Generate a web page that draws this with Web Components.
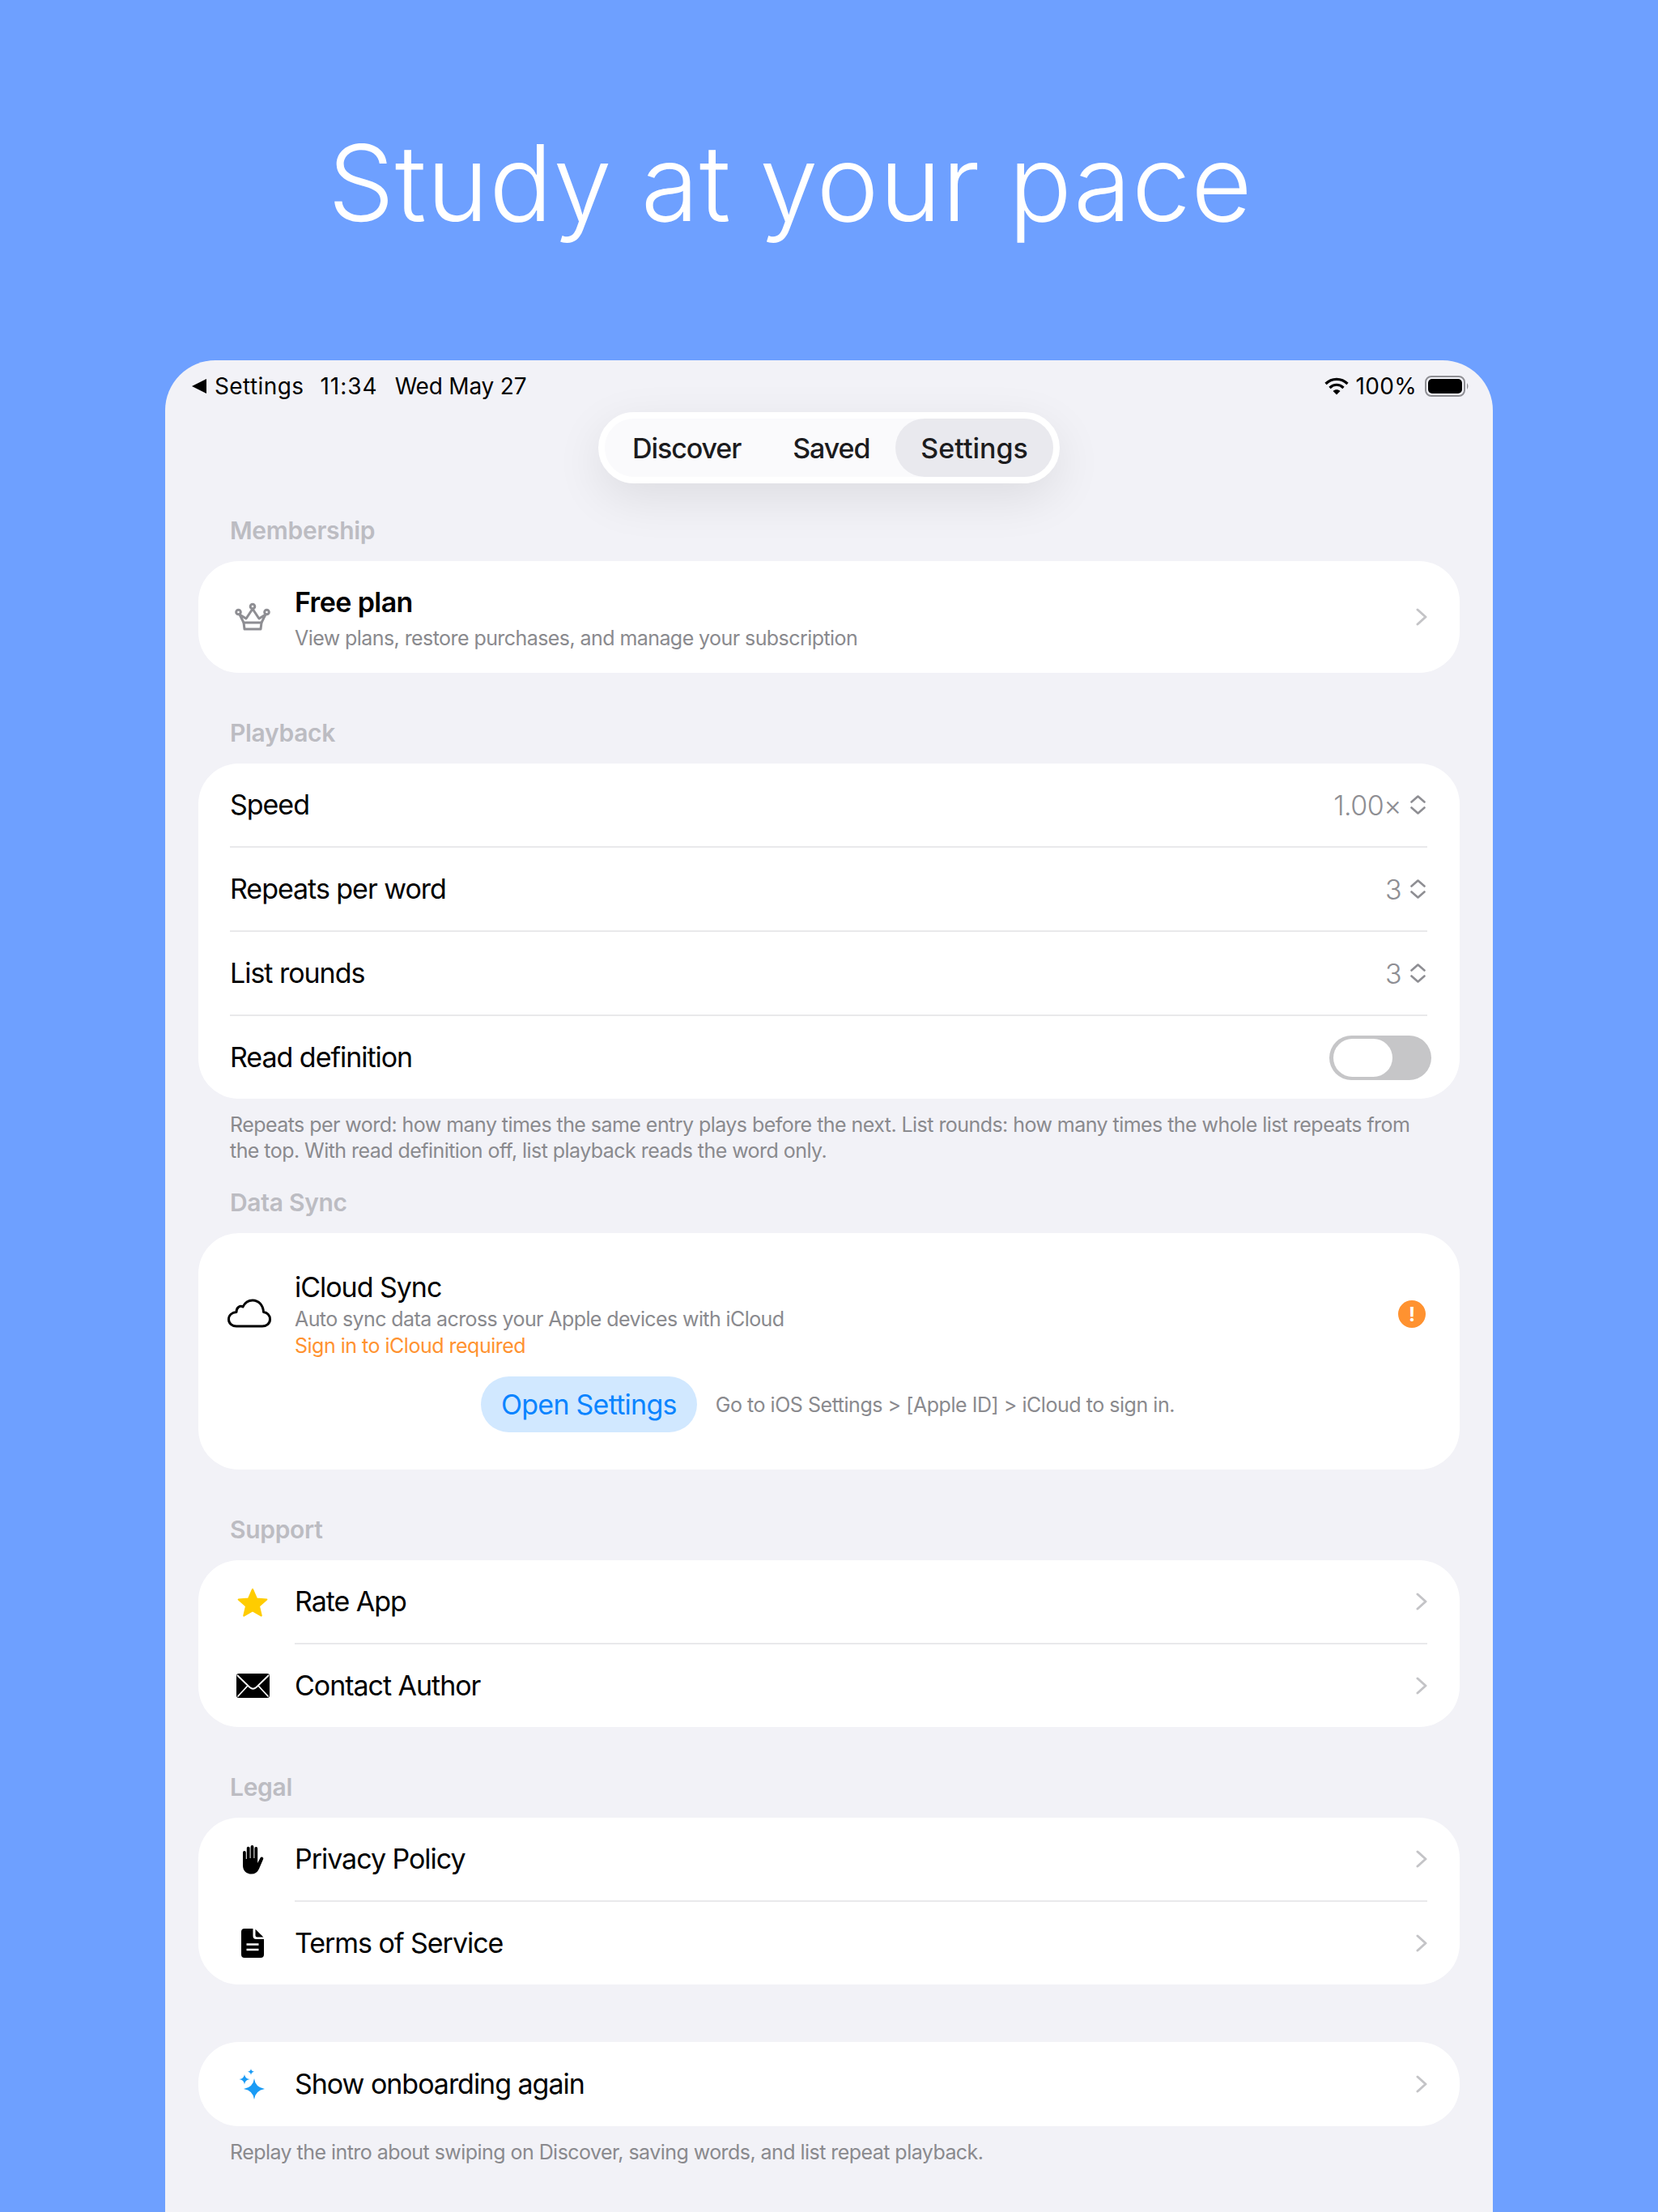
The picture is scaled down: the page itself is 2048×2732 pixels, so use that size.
<!DOCTYPE html>
<html lang="en">
<head>
<meta charset="utf-8">
<title>Study at your pace</title>
<style>
    html, body { margin: 0; padding: 0; }
    body {
        width: 2048px;
        height: 2732px;
        overflow: hidden;
        background: #6EA0FF;
        font-family: Inter, "Liberation Sans", sans-serif;
    }
</style>
</head>
<body>
<app-screen>
    <promo-title slot="title">Study at your pace</promo-title>

    <status-bar></status-bar>
    <tab-bar></tab-bar>

    <settings-section label="Membership">
        <settings-card>
            <settings-row tall strong label="Free plan" sub="View plans, restore purchases, and manage your subscription">
                <app-icon slot="icon" name="crown"></app-icon>
                <row-chevron slot="trailing"></row-chevron>
            </settings-row>
        </settings-card>
    </settings-section>

    <settings-section label="Playback" note="Repeats per word: how many times the same entry plays before the next. List rounds: how many times the whole list repeats from the top. With read definition off, list playback reads the word only.">
        <settings-card>
            <settings-row divider label="Speed"><value-stepper slot="trailing">1.00×</value-stepper></settings-row>
            <settings-row divider label="Repeats per word"><value-stepper slot="trailing">3</value-stepper></settings-row>
            <settings-row divider label="List rounds"><value-stepper slot="trailing">3</value-stepper></settings-row>
            <settings-row label="Read definition"><toggle-switch slot="trailing"></toggle-switch></settings-row>
        </settings-card>
    </settings-section>

    <settings-section close label="Data Sync">
        <settings-card>
            <sync-panel></sync-panel>
        </settings-card>
    </settings-section>

    <settings-section label="Support">
        <settings-card>
            <settings-row divider label="Rate App">
                <app-icon slot="icon" name="star"></app-icon>
                <row-chevron slot="trailing"></row-chevron>
            </settings-row>
            <settings-row label="Contact Author">
                <app-icon slot="icon" name="mail"></app-icon>
                <row-chevron slot="trailing"></row-chevron>
            </settings-row>
        </settings-card>
    </settings-section>

    <settings-section label="Legal">
        <settings-card>
            <settings-row divider label="Privacy Policy">
                <app-icon slot="icon" name="hand"></app-icon>
                <row-chevron slot="trailing"></row-chevron>
            </settings-row>
            <settings-row label="Terms of Service">
                <app-icon slot="icon" name="doc"></app-icon>
                <row-chevron slot="trailing"></row-chevron>
            </settings-row>
        </settings-card>
    </settings-section>

    <settings-section wide note="Replay the intro about swiping on Discover, saving words, and list repeat playback.">
        <settings-card>
            <settings-row roomy label="Show onboarding again">
                <app-icon slot="icon" name="sparkles"></app-icon>
                <row-chevron slot="trailing"></row-chevron>
            </settings-row>
        </settings-card>
    </settings-section>
</app-screen>

<script>
const ICONS = {
    crown: `<svg width="44" height="34" viewBox="0 0 44 34" fill="none" stroke="#8E8E93" stroke-width="3" stroke-linejoin="round">
        <circle cx="4.5" cy="11" r="2.8"/><circle cx="22" cy="4" r="2.8"/><circle cx="39.5" cy="11" r="2.8"/>
        <path d="M6 14 L11 24 H33 L38 14 L30 19 L22 7 L14 19 Z"/>
        <path d="M11 24 L12 32 H32 L33 24"/></svg>`,
    star: `<svg width="38" height="36" viewBox="0 0 38 36"><path fill="#FFCC00" stroke="#FFCC00" stroke-width="2" stroke-linejoin="round" d="M19 2 L24 13.4 L36.4 14.6 L27 22.8 L29.8 34.6 L19 28.3 L8.2 34.6 L11 22.8 L1.6 14.6 L14 13.4 Z"/></svg>`,
    mail: `<svg width="41" height="30" viewBox="0 0 41 30"><rect width="41" height="30" rx="3" fill="#000"/>
        <path d="M1 2 L16.5 17 Q20.5 20.5 24.5 17 L40 2 M1.5 28.5 L13.5 15.5 M39.5 28.5 L27.5 15.5" fill="none" stroke="#fff" stroke-width="1.8"/></svg>`,
    hand: `<svg width="27" height="36" viewBox="0 0 27 36" fill="#000">
        <path d="M1 9 a1.9 1.9 0 0 1 3.8 0 V17 H5.8 V3.6 a1.9 1.9 0 0 1 3.8 0 V16 H10.6 V2 a1.9 1.9 0 0 1 3.8 0 V16 H15.4 V4 a1.9 1.9 0 0 1 3.8 0 V22 L22.6 15.6 a1.9 1.9 0 0 1 3.4 1.8 L20.8 29.5 C18.8 33.6 15.8 35.6 11.8 35.6 C5.4 35.6 1 31.6 1 25 Z"/></svg>`,
    doc: `<svg width="28" height="36" viewBox="0 0 28 36"><path fill="#000" d="M4 0 H14.5 V9 Q14.5 13 18.5 13 H28 V32 Q28 36 24 36 H4 Q0 36 0 32 V4 Q0 0 4 0 Z"/>
        <path fill="#000" d="M17.5 0.8 L27.4 10.5 H19.5 Q17.5 10.5 17.5 8.5 Z"/>
        <path d="M6.5 19.5 H21.5 M6.5 26 H21.5" stroke="#fff" stroke-width="2.4"/></svg>`,
    sparkles: `<svg width="32" height="38" viewBox="0 0 32 38" fill="#1A9BF5">
        <path d="M18 12 Q19.2 23 31 25 Q19.2 27 18 38 Q16.8 27 5 25 Q16.8 23 18 12 Z"/>
        <path d="M6 7 Q6.6 12.4 12.6 13 Q6.6 13.6 6 19.6 Q5.4 13.6 -0.6 13 Q5.4 12.4 6 7 Z"/>
        <path d="M14 0 Q14.4 3.2 18 3.8 Q14.4 4.4 14 8 Q13.6 4.4 10 3.8 Q13.6 3.2 14 0 Z"/></svg>`,
    cloud: `<svg width="54" height="36" viewBox="0 0 54 36" fill="none" stroke="#000" stroke-width="3" stroke-linejoin="round">
        <path d="M11 34 H43 C48.500 34 52.500 30.500 52.500 25.500 C52.500 20.500 49 17 44.500 16.500 C44 8 38.500 2 31 2 C25.500 2 21.500 5 19 10 C17.500 9 15 9 13.500 10.500 C11.500 12 11 14 11 16.500 C5.500 17 1.500 20.500 1.500 25.500 C1.500 30.500 5.500 34 11 34 Z"/></svg>`
};

class AppScreen extends HTMLElement {
    constructor() {
        super();
        this.attachShadow({ mode: "open" });
        this.shadowRoot.innerHTML = `
            <style>
                :host { display: block; }
                .frame {
                    margin: 0 204px;
                    height: 2287px;
                    box-sizing: border-box;
                    padding: 0 41px;
                    background: #F2F2F7;
                    border-radius: 62px 62px 0 0;
                    overflow: hidden;
                }
            </style>
            <slot name="title"></slot>
            <div class="frame"><slot></slot></div>
        `;
    }
}

class PromoTitle extends HTMLElement {
    constructor() {
        super();
        this.attachShadow({ mode: "open" });
        this.shadowRoot.innerHTML = `
            <style>
                :host {
                    display: flex;
                    align-items: center;
                    height: 445px;
                    box-sizing: border-box;
                    padding: 0 0 0 405px;
                    color: #fff;
                    font-size: 130px;
                    font-weight: 300;
                    letter-spacing: .6px;
                    word-spacing: -2px;
                    white-space: nowrap;
                }
                div { margin-top: 6px; }
            </style>
            <div><slot></slot></div>
        `;
    }
}

class StatusBar extends HTMLElement {
    constructor() {
        super();
        this.attachShadow({ mode: "open" });
        this.shadowRoot.innerHTML = `
            <style>
                :host {
                    display: flex;
                    align-items: center;
                    height: 64px;
                    margin: 0 -13px 0 -8px;
                    color: #000;
                    font-size: 28px;
                    line-height: 34px;
                    white-space: nowrap;
                }
                .back { width: 0; height: 0; border: 9px solid transparent; border-left: 0; border-right: 18px solid #000; margin-right: 10px; }
                .app { letter-spacing: .4px; }
                .time { margin-left: 20px; letter-spacing: 1px; }
                .date { margin-left: 21px; letter-spacing: -.2px; }
                .right { margin-left: auto; display: flex; align-items: center; }
                .pct { margin-left: 9px; margin-right: 10px; letter-spacing: .3px; }
                .battery { display: block; }
            </style>
            <span class="back"></span><span class="app">Settings</span><span class="time">11:34</span><span class="date">Wed May 27</span>
            <span class="right">
                <svg width="30" height="22" viewBox="0 0 30 22" fill="none" stroke="#000" stroke-width="3.200">
                    <path d="M1.500 8 C9 0.500 21 0.500 28.500 8"/>
                    <path d="M6.500 13 C11.500 8 18.500 8 23.500 13"/>
                    <path d="M15 21.500 L10.500 17 C13 14.800 17 14.800 19.500 17 Z" fill="#000" stroke="none"/>
                </svg>
                <span class="pct">100%</span>
                <svg class="battery" width="56" height="26" viewBox="0 0 56 26">
                    <rect x="1" y="1" width="48" height="24" rx="7" fill="none" stroke="#8E8E93" stroke-width="2"/>
                    <rect x="4" y="4" width="42" height="18" rx="5" fill="#000"/>
                    <path d="M52 9 Q55 13 52 17 Z" fill="#8E8E93"/>
                </svg>
            </span>
        `;
    }
}

class TabBar extends HTMLElement {
    constructor() {
        super();
        this.attachShadow({ mode: "open" });
        this.shadowRoot.innerHTML = `
            <style>
                :host { display: flex; justify-content: center; }
                .pill {
                    display: flex;
                    align-items: stretch;
                    height: 72px;
                    padding: 0;
                    border: 8px solid #fff;
                    border-radius: 44px;
                    background: #FAFAFC;
                    box-shadow: 0 18px 60px rgba(0, 0, 0, .09);
                    font-size: 34px;
                    font-weight: 500;
                    letter-spacing: -1.1px;
                    color: #1C1C1E;
                }
                .tab { display: flex; align-items: center; padding: 0 32px; border-radius: 36px; }
                .tab:first-child { padding-left: 34px; }
                .on { padding: 0 31px; background: #E9E9EE; letter-spacing: 0; }
            </style>
            <div class="pill">
                <span class="tab">Discover</span>
                <span class="tab">Saved</span>
                <span class="tab on">Settings</span>
            </div>
        `;
    }
}

class SettingsSection extends HTMLElement {
    constructor() {
        super();
        this.attachShadow({ mode: "open" });
        this.shadowRoot.innerHTML = `
            <style>
                :host { display: block; margin-top: 55px; }
                :host(:first-of-type) { margin-top: 39px; }
                :host([close]) { margin-top: 29px; }
                :host([wide]) { margin-top: 71px; }
                .label {
                    height: 38px;
                    margin: 0 0 19px 39px;
                    line-height: 38px;
                    color: #BCBCC2;
                    font-size: 30px;
                    font-weight: 600;
                    letter-spacing: -.3px;
                }
                .note {
                    margin: 16px 39px 0;
                    color: #8A8A8E;
                    font-size: 25px;
                    letter-spacing: -.55px;
                    line-height: 32px;
                }
            </style>
            <div class="label"></div>
            <slot></slot>
            <div class="note"></div>
        `;
        const $label = this.shadowRoot.querySelector(".label");
        const $note = this.shadowRoot.querySelector(".note");
        if (this.hasAttribute("label")) $label.textContent = this.getAttribute("label"); else $label.remove();
        if (this.hasAttribute("note")) $note.textContent = this.getAttribute("note"); else $note.remove();
    }
}

class SettingsCard extends HTMLElement {
    constructor() {
        super();
        this.attachShadow({ mode: "open" });
        this.shadowRoot.innerHTML = `
            <style>
                :host { display: block; background: #fff; border-radius: 50px; overflow: hidden; }
            </style>
            <slot></slot>
        `;
    }
}

class SettingsRow extends HTMLElement {
    constructor() {
        super();
        this.attachShadow({ mode: "open" });
        this.shadowRoot.innerHTML = `
            <style>
                :host { display: flex; height: 102px; padding: 0 40px 0 39px; color: #000; }
                :host([divider]) { height: 104px; }
                :host([roomy]) { height: 104px; }
                :host([tall]) { height: 138px; }
                .icon { display: none; width: 56px; margin-right: 24px; align-items: center; justify-content: center; }
                .body { flex: 1; display: flex; align-items: center; justify-content: space-between; min-width: 0; }
                :host([divider]) .body { border-bottom: 2px solid #E9E9EB; }
                :host([tall]) .text { padding-top: 4px; }
                .label { font-size: 34px; letter-spacing: -1.03px; line-height: 40px; }
                :host([strong]) .label { font-weight: 600; letter-spacing: -.6px; }
                .sub { margin-top: 8px; color: #8A8A8E; font-size: 25px; letter-spacing: -.57px; line-height: 33px; }
            </style>
            <span class="icon"><slot name="icon"></slot></span>
            <div class="body">
                <div class="text">
                    <div class="label"></div>
                    <div class="sub"></div>
                </div>
                <slot name="trailing"></slot>
            </div>
        `;
        this.shadowRoot.querySelector(".label").textContent = this.getAttribute("label");
        const $sub = this.shadowRoot.querySelector(".sub");
        if (this.hasAttribute("sub")) $sub.textContent = this.getAttribute("sub"); else $sub.remove();
        if (this.querySelector('[slot="icon"]')) this.shadowRoot.querySelector(".icon").style.display = "flex";
    }
}

class AppIcon extends HTMLElement {
    constructor() {
        super();
        this.attachShadow({ mode: "open" });
        this.shadowRoot.innerHTML = `
            <style>
                :host { display: flex; align-items: center; justify-content: center; }
                svg { display: block; overflow: visible; }
            </style>
            ${ICONS[this.getAttribute("name")]}
        `;
    }
}

class RowChevron extends HTMLElement {
    constructor() {
        super();
        this.attachShadow({ mode: "open" });
        this.shadowRoot.innerHTML = `
            <style>:host { display: block; } svg { display: block; }</style>
            <svg width="14" height="22" viewBox="0 0 14 22" fill="none" stroke="#C4C4C7" stroke-width="3" stroke-linecap="round" stroke-linejoin="round">
                <path d="M2 2 L12 11 L2 20"/>
            </svg>
        `;
    }
}

class ValueStepper extends HTMLElement {
    constructor() {
        super();
        this.attachShadow({ mode: "open" });
        this.shadowRoot.innerHTML = `
            <style>
                :host { display: flex; align-items: center; gap: 11px; margin-right: 2px; color: #8E8E93; font-size: 34px; font-weight: 300; letter-spacing: -.5px; }
                svg { display: block; }
            </style>
            <slot></slot>
            <svg width="19" height="24" viewBox="0 0 19 24" fill="none" stroke="#8E8E93" stroke-width="2.600" stroke-linecap="round" stroke-linejoin="round">
                <path d="M1.500 8.500 L9.500 1.500 L17.500 8.500"/>
                <path d="M1.500 15.500 L9.500 22.500 L17.500 15.500"/>
            </svg>
        `;
    }
}

class ToggleSwitch extends HTMLElement {
    constructor() {
        super();
        this.attachShadow({ mode: "open" });
        this.shadowRoot.innerHTML = `
            <style>
                :host {
                    display: block;
                    width: 126px;
                    height: 55px;
                    margin-right: -5px;
                    padding: 4px 0 4px 5px;
                    box-sizing: border-box;
                    background: #C6C6C8;
                    border-radius: 28px;
                }
                .knob { width: 73px; height: 47px; background: #fff; border-radius: 24px; }
            </style>
            <div class="knob"></div>
        `;
    }
}

class SyncPanel extends HTMLElement {
    constructor() {
        super();
        this.attachShadow({ mode: "open" });
        this.shadowRoot.innerHTML = `
            <style>
                :host { display: block; padding: 47px 40px 46px 39px; color: #000; }
                .top { display: flex; align-items: center; }
                .cloud { width: 80px; flex: none; margin-left: -3px; margin-right: 3px; margin-top: -5px; }
                .cloud svg { display: block; }
                .text { flex: 1; }
                .title { font-size: 34px; letter-spacing: -1.03px; line-height: 40px; }
                .sub { margin-top: 3px; color: #8A8A8E; font-size: 25px; letter-spacing: -.6px; line-height: 33px; }
                .warn { color: #FF9230; font-size: 25px; letter-spacing: -.5px; line-height: 33px; }
                .alert {
                    display: flex;
                    align-items: center;
                    justify-content: center;
                    width: 34px;
                    height: 34px;
                    margin-right: 2px;
                    margin-top: -3px;
                    border-radius: 50%;
                    background: #FF9230;
                    color: #fff;
                    font-size: 24px;
                    font-weight: 700;
                }
                .actions { display: flex; align-items: center; gap: 23px; margin: 21px 0 0 310px; }
                .button {
                    display: flex;
                    align-items: center;
                    height: 69px;
                    padding: 0 25px;
                    border-radius: 35px;
                    background: #D1E8FF;
                    color: #0A84FF;
                    font-size: 34px;
                    letter-spacing: -.75px;
                }
                .hint { color: #8A8A8E; font-size: 25px; letter-spacing: -.46px; }
            </style>
            <div class="top">
                <div class="cloud">${ICONS.cloud}</div>
                <div class="text">
                    <div class="title">iCloud Sync</div>
                    <div class="sub">Auto sync data across your Apple devices with iCloud</div>
                    <div class="warn">Sign in to iCloud required</div>
                </div>
                <div class="alert">!</div>
            </div>
            <div class="actions">
                <div class="button">Open Settings</div>
                <div class="hint">Go to iOS Settings &gt; [Apple ID] &gt; iCloud to sign in.</div>
            </div>
        `;
    }
}

customElements.define("app-screen", AppScreen);
customElements.define("promo-title", PromoTitle);
customElements.define("status-bar", StatusBar);
customElements.define("tab-bar", TabBar);
customElements.define("settings-section", SettingsSection);
customElements.define("settings-card", SettingsCard);
customElements.define("settings-row", SettingsRow);
customElements.define("app-icon", AppIcon);
customElements.define("row-chevron", RowChevron);
customElements.define("value-stepper", ValueStepper);
customElements.define("toggle-switch", ToggleSwitch);
customElements.define("sync-panel", SyncPanel);
</script>
</body>
</html>
